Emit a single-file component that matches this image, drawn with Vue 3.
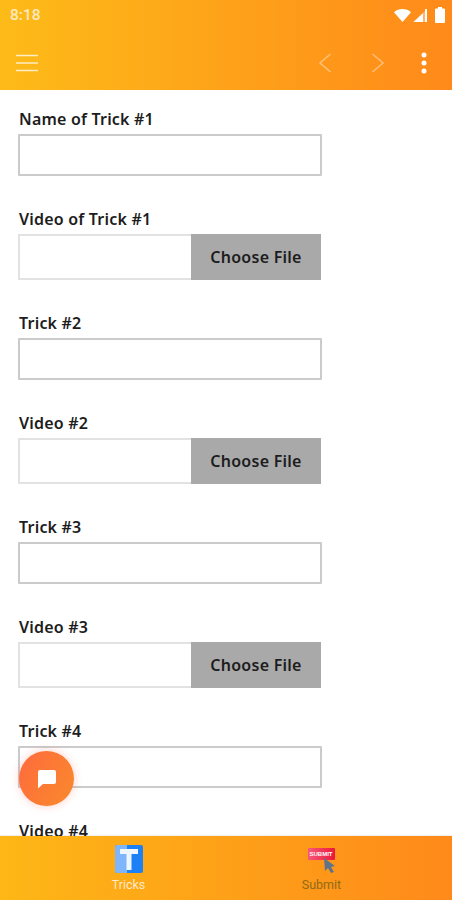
<script setup>
const fields = [
  { label: 'Name of Trick #1', type: 'text' },
  { label: 'Video of Trick #1', type: 'file' },
  { label: 'Trick #2', type: 'text' },
  { label: 'Video #2', type: 'file' },
  { label: 'Trick #3', type: 'text' },
  { label: 'Video #3', type: 'file' },
  { label: 'Trick #4', type: 'text' },
  { label: 'Video #4', type: 'file' },
];
</script>

<template>
  <div class="screen">
    <header class="appbar">
      <div class="status">
        <span class="time">8:18</span>
        <div class="status-icons">
          <svg width="17" height="13" viewBox="0 0 17 13"><path d="M0 3.200C2.300 1.200 5.200 0 8.500 0s6.200 1.200 8.500 3.200L8.500 13z" fill="#fff" /></svg>
          <svg width="15" height="15" viewBox="0 0 15 15"><path d="M14 1v13H0z" fill="#fff" fill-opacity=".35" /><path d="M10 5.200V14H0.500z" fill="#fff" /><rect x="12" y="1" width="2" height="13" fill="#fff" /></svg>
          <svg width="10" height="16" viewBox="0 0 10 16"><path d="M3 0h4v1.500h2.200a.8.8 0 0 1 .8.8V15a1 1 0 0 1-1 1H1a1 1 0 0 1-1-1V2.300a.8.8 0 0 1 .8-.8H3z" fill="#fff" /></svg>
        </div>
      </div>
      <div class="toolbar">
        <svg class="menu" width="22" height="18" viewBox="0 0 22 18"><path d="M0 1.500h22M0 9h22M0 16.500h22" stroke="#fff" stroke-opacity=".75" stroke-width="1.600" fill="none" /></svg>
        <div class="actions">
          <svg width="14" height="22" viewBox="0 0 14 22"><path d="M12.500 2 2 11l10.500 9" stroke="#fff" stroke-opacity=".4" stroke-width="1.600" fill="none" /></svg>
          <svg width="14" height="22" viewBox="0 0 14 22"><path d="M1.500 2 12 11 1.500 20" stroke="#fff" stroke-opacity=".4" stroke-width="1.600" fill="none" /></svg>
          <svg width="6" height="22" viewBox="0 0 6 22"><circle cx="3" cy="3" r="2.500" fill="#fff" /><circle cx="3" cy="11" r="2.500" fill="#fff" /><circle cx="3" cy="19" r="2.500" fill="#fff" /></svg>
        </div>
      </div>
    </header>

    <main class="form">
      <div v-for="field in fields" :key="field.label" class="field">
        <label class="label">{{ field.label }}</label>
        <div v-if="field.type === 'file'" class="file">
          <span class="file-name"></span>
          <span class="file-btn">Choose File</span>
        </div>
        <div v-else class="input"></div>
      </div>
    </main>

    <nav class="tabbar">
      <div class="tab">
        <svg width="28" height="28" viewBox="0 0 28 28">
          <rect width="28" height="28" rx="2" fill="#1d80f5" />
          <path d="M0 2a2 2 0 0 1 2-2h10v28H2a2 2 0 0 1-2-2z" fill="#7fb6fb" />
          <path d="M5 4h18v5h-6.500v16h-5V9H5z" fill="#eef6ff" />
        </svg>
        <span class="tab-label light">Tricks</span>
      </div>
      <div class="tab">
        <div class="submit-icon">
          <span class="submit-chip">SUBMIT</span>
          <svg class="cursor" width="13" height="15" viewBox="0 0 13 15"><path d="M1 0l11 8-4 1 3 5-3 1-3-5-3 3z" fill="#5f7488" /></svg>
        </div>
        <span class="tab-label dark">Submit</span>
      </div>
    </nav>

    <button class="fab" aria-label="Chat">
      <svg width="20" height="20" viewBox="0 0 20 20"><path d="M3 1h14a2 2 0 0 1 2 2v10a2 2 0 0 1-2 2H6l-5 4.500V3a2 2 0 0 1 2-2z" fill="#fff" /></svg>
    </button>
  </div>
</template>

<style scoped>
.screen {
  position: relative;
  display: flex;
  flex-direction: column;
  width: 452px;
  height: 900px;
  overflow: hidden;
  background: #fff;
  font-family: "Noto Sans", "Open Sans", sans-serif;
}

.appbar {
  flex: none;
  height: 90px;
  background: linear-gradient(90deg, #fdbb18, #ff8a1a);
  color: #fff;
}

.status {
  display: flex;
  align-items: center;
  justify-content: space-between;
  height: 30px;
  padding: 0 7px 0 10px;
}

.time {
  font-family: Roboto, sans-serif;
  font-size: 15.500px;
  font-weight: 500;
  opacity: 0.7;
}

.status-icons {
  display: flex;
  align-items: center;
  gap: 2px;
}

.status-icons svg:last-child {
  margin-left: 5px;
}

.toolbar {
  display: flex;
  align-items: center;
  justify-content: space-between;
  height: 60px;
  padding: 3px 25px 0 16px;
}

.actions {
  display: flex;
  align-items: center;
}

.actions svg:nth-child(2) {
  margin-left: 39px;
}

.actions svg:nth-child(3) {
  margin-left: 36px;
}

.form {
  flex: 1;
  min-height: 0;
  overflow: hidden;
  padding: 19px 0 0 18px;
}

.field {
  width: 304px;
  margin-bottom: 33px;
}

.label {
  display: block;
  height: 25px;
  padding-left: 1px;
  font-size: 16px;
  font-weight: 600;
  line-height: 20px;
  letter-spacing: 0.2px;
  color: #1d1d1d;
}

.input {
  box-sizing: border-box;
  height: 42px;
  border: 2px solid #cbcbcb;
  border-radius: 1px;
  background: #fff;
}

.file {
  display: flex;
  height: 46px;
  box-sizing: border-box;
  border: 2px solid #e2e2e2;
  margin-right: 1px;
}

.file-name {
  flex: 1;
}

.file-btn {
  flex: none;
  display: flex;
  align-items: center;
  justify-content: center;
  width: 130px;
  margin: -2px -2px -2px 0;
  background: #a9a9a9;
  font-size: 16px;
  font-weight: 600;
  letter-spacing: 0.25px;
  color: #1d1d1d;
}

.tabbar {
  flex: none;
  display: grid;
  grid-template-columns: 1fr 1fr;
  height: 64px;
  background: linear-gradient(90deg, #fdb716, #ff8a1a);
  box-shadow: 0 -1px 1px rgba(0, 0, 0, 0.06);
}

.tab {
  display: flex;
  flex-direction: column;
  align-items: center;
  padding-top: 9px;
}

.tab:first-child {
  padding-left: 31px;
}

.tab:last-child {
  padding-right: 35px;
}

.tab-label {
  margin-top: 4px;
  font-family: Roboto, sans-serif;
  font-size: 12.500px;
  line-height: 15px;
}

.tab-label.light {
  color: rgba(255, 255, 255, 0.75);
}

.tab-label.dark {
  color: #8f6a18;
}

.submit-icon {
  position: relative;
  width: 28px;
  height: 28px;
}

.submit-chip {
  position: absolute;
  top: 3px;
  left: 0;
  width: 27px;
  height: 12px;
  border-radius: 1px;
  background: linear-gradient(90deg, #f7587a, #ea1839);
  color: #fff;
  font-family: "Liberation Sans", sans-serif;
  font-size: 6px;
  font-weight: 700;
  line-height: 12px;
  text-align: center;
}

.cursor {
  position: absolute;
  top: 13px;
  left: 15px;
}

.fab {
  position: absolute;
  left: 19px;
  top: 751px;
  display: flex;
  align-items: center;
  justify-content: center;
  width: 55px;
  height: 55px;
  padding: 0;
  border: 0;
  border-radius: 50%;
  background: linear-gradient(120deg, #ff6a3d, #f98a2c);
  box-shadow: 0 0 8px rgba(255, 90, 70, 0.3);
}
</style>
